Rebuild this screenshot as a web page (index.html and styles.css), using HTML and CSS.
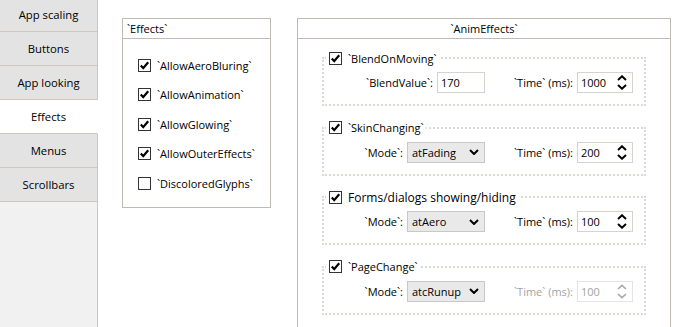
FILE: index.html
```html
<!DOCTYPE html>
<html lang="en">
	<head>
		<meta charset="utf-8">
		<title>Effects - Options</title>
		<link rel="stylesheet" href="styles.css">
	</head>
	<body>
		<div class="window">
			<nav class="tabs">
				<div class="tab">App scaling</div>
				<div class="tab">Buttons</div>
				<div class="tab">App looking</div>
				<div class="tab active">Effects</div>
				<div class="tab">Menus</div>
				<div class="tab">Scrollbars</div>
				<div class="tabs-fill"></div>
			</nav>
			<main class="page">
				<section class="group effects">
					<div class="group-head">`Effects`</div>
					<div class="effects-body">
						<label class="check-row"><span class="box"><svg width="11" height="11" viewBox="0 0 11 11"><path d="M1.8 5.6 L4.2 8.2 L9.2 2.2"/></svg></span>`AllowAeroBluring`</label>
						<label class="check-row"><span class="box"><svg width="11" height="11" viewBox="0 0 11 11"><path d="M1.8 5.6 L4.2 8.2 L9.2 2.2"/></svg></span>`AllowAnimation`</label>
						<label class="check-row"><span class="box"><svg width="11" height="11" viewBox="0 0 11 11"><path d="M1.8 5.6 L4.2 8.2 L9.2 2.2"/></svg></span>`AllowGlowing`</label>
						<label class="check-row"><span class="box"><svg width="11" height="11" viewBox="0 0 11 11"><path d="M1.8 5.6 L4.2 8.2 L9.2 2.2"/></svg></span>`AllowOuterEffects`</label>
						<label class="check-row"><span class="box"></span>`DiscoloredGlyphs`</label>
					</div>
				</section>

				<section class="group anim">
					<div class="group-head center">`AnimEffects`</div>
					<div class="anim-body">
						<fieldset class="sub">
							<legend><span class="box"><svg width="11" height="11" viewBox="0 0 11 11"><path d="M1.8 5.6 L4.2 8.2 L9.2 2.2"/></svg></span>`BlendOnMoving`</legend>
							<div class="sub-row">
								<div class="field"><span>`BlendValue`:</span><span class="edit">170</span></div>
								<div class="field"><span>`Time` (ms):</span><span class="spin">1000<svg width="10" height="15" viewBox="0 0 10 15"><path d="M1 5 L5 1.3 L9 5 M1 10 L5 13.7 L9 10"/></svg></span></div>
							</div>
						</fieldset>

						<fieldset class="sub">
							<legend><span class="box"><svg width="11" height="11" viewBox="0 0 11 11"><path d="M1.8 5.6 L4.2 8.2 L9.2 2.2"/></svg></span>`SkinChanging`</legend>
							<div class="sub-row">
								<div class="field"><span>`Mode`:</span><span class="select">atFading<svg width="10" height="6" viewBox="0 0 10 6"><path d="M1 1 L5 5 L9 1"/></svg></span></div>
								<div class="field"><span>`Time` (ms):</span><span class="spin">200<svg width="10" height="15" viewBox="0 0 10 15"><path d="M1 5 L5 1.3 L9 5 M1 10 L5 13.7 L9 10"/></svg></span></div>
							</div>
						</fieldset>

						<fieldset class="sub">
							<legend class="plain"><span class="box"><svg width="11" height="11" viewBox="0 0 11 11"><path d="M1.8 5.6 L4.2 8.2 L9.2 2.2"/></svg></span>Forms/dialogs showing/hiding</legend>
							<div class="sub-row">
								<div class="field"><span>`Mode`:</span><span class="select">atAero<svg width="10" height="6" viewBox="0 0 10 6"><path d="M1 1 L5 5 L9 1"/></svg></span></div>
								<div class="field"><span>`Time` (ms):</span><span class="spin">100<svg width="10" height="15" viewBox="0 0 10 15"><path d="M1 5 L5 1.3 L9 5 M1 10 L5 13.7 L9 10"/></svg></span></div>
							</div>
						</fieldset>

						<fieldset class="sub">
							<legend><span class="box"><svg width="11" height="11" viewBox="0 0 11 11"><path d="M1.8 5.6 L4.2 8.2 L9.2 2.2"/></svg></span>`PageChange`</legend>
							<div class="sub-row">
								<div class="field"><span>`Mode`:</span><span class="select">atcRunup<svg width="10" height="6" viewBox="0 0 10 6"><path d="M1 1 L5 5 L9 1"/></svg></span></div>
								<div class="field off"><span>`Time` (ms):</span><span class="spin">100<svg width="10" height="15" viewBox="0 0 10 15"><path d="M1 5 L5 1.3 L9 5 M1 10 L5 13.7 L9 10"/></svg></span></div>
							</div>
						</fieldset>
					</div>
				</section>
			</main>
		</div>
	</body>
</html>
```
FILE: styles.css
```css
html, body {
	margin: 0;
	height: 100%;
	overflow: hidden;
}

body {
	font-family: "Open Sans", "Noto Sans", sans-serif;
	font-size: 11px;
	color: #000;
	background: #fff;
}

.window {
	display: flex;
	height: 327px;
	overflow: hidden;
}

/* left tab strip */
.tabs {
	width: 98px;
	display: flex;
	flex-direction: column;
	margin-top: -2px;
	flex-shrink: 0;
	font-size: 11.3px;
}

.tab {
	height: 34px;
	box-sizing: border-box;
	flex-shrink: 0;
	display: flex;
	align-items: center;
	justify-content: center;
	background: #e3e3e3;
	border-right: 1px solid #ccc7c2;
	border-bottom: 1px solid #ccc7c2;
}

.tab.active {
	background: #fff;
	border-right-color: #fff;
}

.tabs-fill {
	flex: 1;
	background: #f1f1f1;
	border-right: 1px solid #ccc7c2;
}

/* content */
.page {
	flex: 1;
	display: flex;
	align-items: flex-start;
	gap: 26px;
	padding: 18px 0 0 24px;
}

.group {
	box-sizing: border-box;
	border: 1px solid #c0bab4;
	background: #fff;
}

.group-head {
	height: 19px;
	line-height: 19px;
	padding-left: 4px;
	border-bottom: 1px solid #c0bab4;
}

.group-head.center {
	padding-left: 0;
	text-align: center;
}

.effects {
	width: 149px;
}

.effects-body {
	display: flex;
	flex-direction: column;
	gap: 13.5px;
	padding: 18px 0 16px 15px;
}

.check-row {
	display: flex;
	align-items: center;
	gap: 6px;
	height: 16px;
}

.box {
	width: 13px;
	height: 13px;
	box-sizing: border-box;
	flex-shrink: 0;
	border: 1px solid #333;
	background: #fff;
	display: flex;
	align-items: center;
	justify-content: center;
}

.box svg path {
	fill: none;
	stroke: #000;
	stroke-width: 2.2;
}

.anim {
	width: 374px;
}

.anim-body {
	padding: 11px 24px 30px 24px;
}

.sub {
	margin: 0 0 13.5px;
	padding: 6px 11px 11px 0;
	min-width: 0;
	border: 2px dotted #dcd8d4;
}

.sub legend {
	display: flex;
	align-items: center;
	gap: 6px;
	height: 16px;
	margin-left: 2px;
	padding: 0 3px;
}

.sub legend.plain {
	font-size: 12px;
}

.sub-row {
	display: grid;
	grid-template-columns: 161px 148px;
	height: 21px;
}

.field {
	display: flex;
	align-items: center;
	justify-content: flex-end;
	gap: 4px;
}

.edit,
.spin,
.select {
	height: 21px;
	box-sizing: border-box;
	display: flex;
	align-items: center;
}

.edit {
	width: 48px;
	padding-left: 3px;
	border: 1px solid #d6d2ce;
}

.spin {
	width: 56px;
	padding: 0 5px 0 3px;
	justify-content: space-between;
	border: 1px solid #d6d2ce;
}

.select {
	width: 78px;
	padding: 0 5px 0 4px;
	justify-content: space-between;
	background: #e9e9e9;
	border: 1px solid #c8c8c8;
}

.spin svg path,
.select svg path {
	fill: none;
	stroke: #000;
	stroke-width: 2;
}

.field.off {
	color: #a3a3a3;
}

.field.off .spin {
	border-color: #e6e3e0;
}

.field.off .spin svg path {
	stroke: #a8a8a8;
	stroke-width: 1.6;
}
```
